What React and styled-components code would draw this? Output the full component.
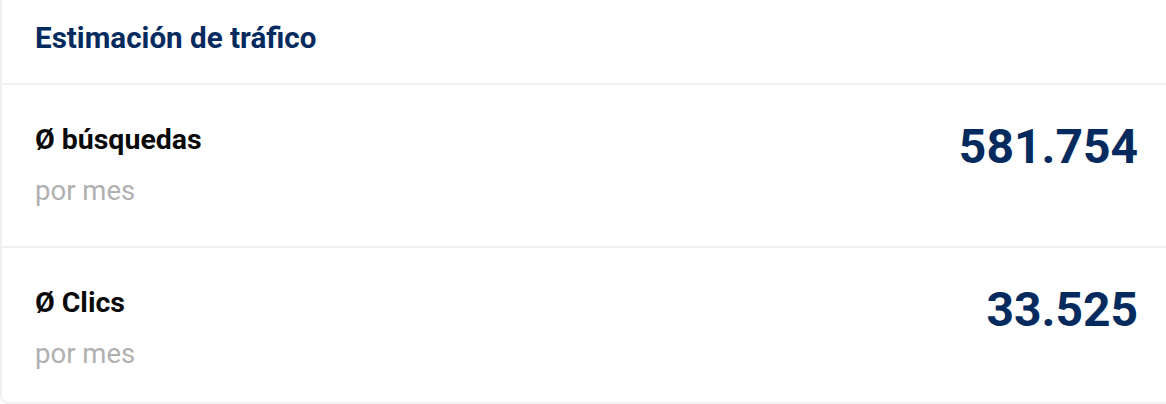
import React from 'react'
import styled, { createGlobalStyle } from 'styled-components';

const Global = createGlobalStyle`
    html, body {
        margin: 0;
        padding: 0;
        background: #fff;
    }
    body {
        font-family: Roboto, "Liberation Sans", sans-serif;
        -webkit-font-smoothing: antialiased;
    }
`;

const Card = styled.section`
    box-sizing: border-box;
    width: 1180px;
    height: 404px;
    background: #fff;
    border-left: 2px solid #efefef;
    border-bottom: 2px solid #f3f3f3;
    border-bottom-left-radius: 8px;
    overflow: hidden;
`;

const Header = styled.header`
    box-sizing: border-box;
    height: 85px;
    padding: 0 0 8px 33px;
    display: flex;
    align-items: center;
    border-bottom: 2px solid #f0f0f0;
`;

const Title = styled.h2`
    margin: 0;
    font-size: 29.6px;
    font-weight: 700;
    color: #052b5e;
    line-height: 34px;
`;

const Row = styled.div`
    box-sizing: border-box;
    height: ${p => p.$h}px;
    padding: 38px 42px 0 33px;
    display: flex;
    justify-content: space-between;
    align-items: flex-start;
    border-bottom: ${p => (p.$last ? 'none' : '2px solid #f0f0f0')};
`;

const Labels = styled.div`
    display: flex;
    flex-direction: column;
    gap: 17px;
`;

const Label = styled.div`
    font-size: 28.5px;
    font-weight: 700;
    color: #0a0a0a;
    line-height: 34px;
`;

const Sub = styled.div`
    font-size: 27.5px;
    font-weight: 400;
    color: #b0b0b0;
    line-height: 34px;
`;

const Value = styled.div`
    font-size: 48px;
    font-weight: 700;
    color: #052b5e;
    line-height: 56px;
    margin-top: -4px;
`;

const rows = [
    { label: 'búsquedas', value: '581.754', h: 163 },
    { label: 'Clics', value: '33.525', h: 154 },
];

export default function App() {
    return (
        <>
            <Global />
            <Card>
                <Header>
                    <Title>Estimación de tráfico</Title>
                </Header>
                {rows.map((r, i) => (
                    <Row key={r.label} $h={r.h} $last={i === rows.length - 1}>
                        <Labels>
                            <Label>Ø {r.label}</Label>
                            <Sub>por mes</Sub>
                        </Labels>
                        <Value>{r.value}</Value>
                    </Row>
                ))}
            </Card>
        </>
    )
}
